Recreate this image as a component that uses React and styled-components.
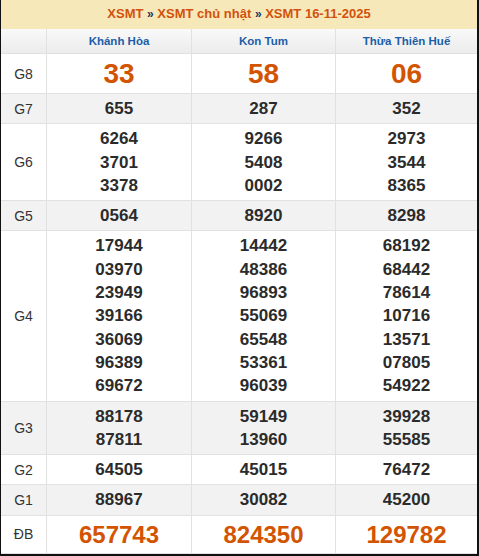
import React from "react";
import styled, { createGlobalStyle } from "styled-components";

const GlobalStyle = createGlobalStyle`
  body {
    margin: 0;
    background: #fff;
    font-family: "Liberation Sans", Arial, sans-serif;
  }
`;

const provinces = ["Khánh Hòa", "Kon Tum", "Thừa Thiên Huế"];

const prizes = [
  { label: "G8", big: true, values: [["33"], ["58"], ["06"]] },
  { label: "G7", values: [["655"], ["287"], ["352"]] },
  {
    label: "G6",
    values: [
      ["6264", "3701", "3378"],
      ["9266", "5408", "0002"],
      ["2973", "3544", "8365"],
    ],
  },
  { label: "G5", values: [["0564"], ["8920"], ["8298"]] },
  {
    label: "G4",
    values: [
      ["17944", "03970", "23949", "39166", "36069", "96389", "69672"],
      ["14442", "48386", "96893", "55069", "65548", "53361", "96039"],
      ["68192", "68442", "78614", "10716", "13571", "07805", "54922"],
    ],
  },
  {
    label: "G3",
    values: [
      ["88178", "87811"],
      ["59149", "13960"],
      ["39928", "55585"],
    ],
  },
  { label: "G2", values: [["64505"], ["45015"], ["76472"]] },
  { label: "G1", values: [["88967"], ["30082"], ["45200"]] },
  { label: "ĐB", special: true, values: [["657743"], ["824350"], ["129782"]] },
];

export default function App() {
  return (
    <>
      <GlobalStyle />
      <Board>
        <Title>
          <TitleLink>XSMT</TitleLink> <Sep>»</Sep>{" "}
          <TitleLink>XSMT chủ nhật</TitleLink> <Sep>»</Sep>{" "}
          <TitleLink>XSMT 16-11-2025</TitleLink>
        </Title>
        <HeadRow>
          <HeadCell />
          {provinces.map((p) => (
            <HeadCell key={p}>{p}</HeadCell>
          ))}
        </HeadRow>
        {prizes.map((row, i) => (
          <Row key={row.label} $shaded={i % 2 === 1}>
            <Label>{row.label}</Label>
            {row.values.map((nums, j) => (
              <Cell key={j}>
                {nums.map((n, k) => (
                  <Num key={k} $big={row.big} $special={row.special}>
                    {n}
                  </Num>
                ))}
              </Cell>
            ))}
          </Row>
        ))}
      </Board>
    </>
  );
}

const Board = styled.div`
  width: 479px;
  box-sizing: border-box;
  border-left: 1px solid #111;
  border-right: 2px solid #111;
  border-bottom: 2px solid #111;
  background: #fff;
`;

const Title = styled.div`
  background: #f7e8b9;
  text-align: center;
  padding: 4px 0 5px;
  line-height: 20px;
  font-size: 13px;
  font-weight: bold;
`;

const TitleLink = styled.span`
  color: #d2520c;
`;

const Sep = styled.span`
  color: #1d3766;
  font-size: 12px;
`;

const Grid = styled.div`
  display: grid;
  grid-template-columns: 45px 145px 144px 1fr;
  border-bottom: 1px solid #e1e1e1;
`;

const HeadRow = styled(Grid)`
  background: linear-gradient(#f9f9f9, #ececec);
`;

const HeadCell = styled.div`
  padding: 4px 0 4px;
  line-height: 16px;
  text-align: center;
  font-size: 11.5px;
  font-weight: bold;
  color: #1c5ea8;
  & + & {
    border-left: 1px solid #e1e1e1;
  }
`;

const Row = styled(Grid)`
  background: ${(p) => (p.$shaded ? "#f2f2f2" : "#fff")};
`;

const Label = styled.div`
  display: flex;
  align-items: center;
  justify-content: center;
  font-size: 14px;
  color: #333;
`;

const Cell = styled.div`
  display: flex;
  flex-direction: column;
  align-items: center;
  justify-content: center;
  padding: 3px 0;
  border-left: 1px solid #e1e1e1;
`;

const Num = styled.div`
  font-weight: bold;
  font-size: ${(p) => (p.$big ? "28px" : p.$special ? "24px" : "17px")};
  line-height: ${(p) => (p.$big ? "33px" : p.$special ? "31px" : "23.3px")};
  color: ${(p) => (p.$big || p.$special ? "#d35400" : "#2b2b2b")};
`;
